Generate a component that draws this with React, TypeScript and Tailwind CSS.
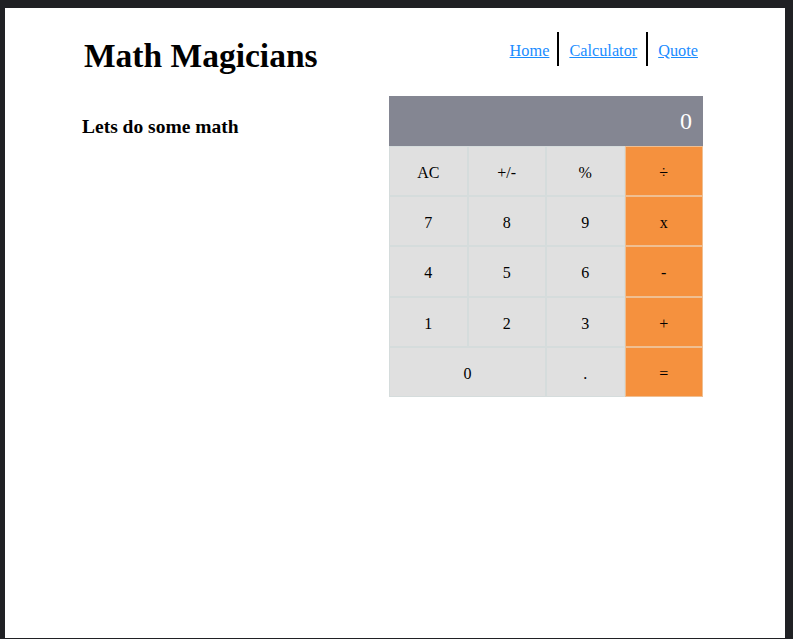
import React from "react";

const keys = [
  { label: "AC" },
  { label: "+/-" },
  { label: "%" },
  { label: "÷", op: true },
  { label: "7" },
  { label: "8" },
  { label: "9" },
  { label: "x", op: true },
  { label: "4" },
  { label: "5" },
  { label: "6" },
  { label: "-", op: true },
  { label: "1" },
  { label: "2" },
  { label: "3" },
  { label: "+", op: true },
  { label: "0", wide: true },
  { label: "." },
  { label: "=", op: true },
];

function Calculator() {
  return (
    <div className="w-[314px]">
      <div className="h-[50px] bg-[#848692] flex items-center justify-end pr-[11px] text-white text-[24px]">
        0
      </div>
      <div className="grid grid-cols-4">
        {keys.map((k) => (
          <button
            key={k.label}
            type="button"
            className={`h-[50.4px] border pt-[4px] text-[16px] text-black flex items-center justify-center ${
              k.wide ? "col-span-2" : ""
            } ${k.op ? "bg-[#f5913e] border-[#efbf92]" : "bg-[#e0e0e0] border-[#d5dcdc]"}`}
          >
            {k.label}
          </button>
        ))}
      </div>
    </div>
  );
}

export default function App() {
  return (
    <div
      className="h-[639px] bg-[#202124] pt-[8px] pl-[5px] pr-[8px] pb-[1px]"
      style={{ fontFamily: '"Liberation Serif", "Times New Roman", serif' }}
    >
      <div className="h-full bg-white">
        <div className="ml-[77px] w-[621px]">
          {/* Header */}
          <header className="flex justify-between items-start">
            <h1 className="mt-[31px] ml-[2px] text-[33.5px] leading-none font-bold text-black">
              Math Magicians
            </h1>
            <nav className="mt-[24px] mr-[5px] flex items-center text-[16.3px]">
              <a href="#" className="pt-[4px] text-[#1a8cff] underline">Home</a>
              <span className="w-[2px] h-[34px] bg-black ml-[8px] mr-[10px]" />
              <a href="#" className="pt-[4px] text-[#1a8cff] underline">Calculator</a>
              <span className="w-[2px] h-[34px] bg-black ml-[9px] mr-[10px]" />
              <a href="#" className="pt-[4px] text-[#1a8cff] underline">Quote</a>
            </nav>
          </header>

          {/* Main */}
          <main className="mt-[23px] flex">
            <div className="w-[307px] pt-[16px]">
              <h3 className="text-[19.5px] font-bold text-black">Lets do some math</h3>
            </div>
            <Calculator />
          </main>
        </div>
      </div>
    </div>
  );
}
